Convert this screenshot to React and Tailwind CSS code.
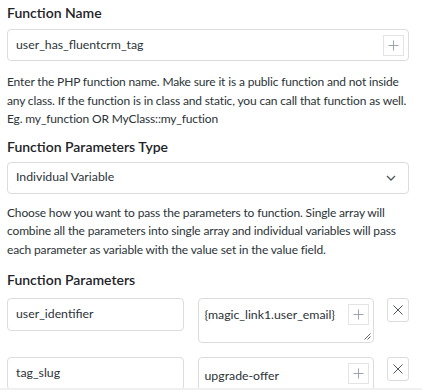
import React from "react";

const font = { fontFamily: "'Segoe UI', Lato, 'Open Sans', sans-serif" };

function PlusBox({ className = "" }) {
  return (
    <div className={"flex h-[21px] w-[21px] items-center justify-center border border-[#e4e4e7] bg-white " + className}>
      <svg width="11" height="11" viewBox="0 0 11 11">
        <path d="M5.5 0.5v10M0.5 5.5h10" stroke="#9ca3af" strokeWidth="1" />
      </svg>
    </div>
  );
}

function CloseBox() {
  return (
    <div className="flex h-[24px] w-[22px] shrink-0 items-center justify-center rounded-[3px] border border-[#dcdcde] bg-white">
      <svg width="10" height="10" viewBox="0 0 10 10">
        <path d="M0.5 0.5l9 9M9.5 0.5l-9 9" stroke="#50575e" strokeWidth="1" />
      </svg>
    </div>
  );
}

function Label({ children, className = "" }) {
  return (
    <div className={"text-[14px] font-semibold leading-[20px] text-[#1d2327] " + className}>{children}</div>
  );
}

function Help({ children, className = "" }) {
  return (
    <p className={"mr-[-6px] text-[12px] leading-[18.5px] tracking-[-0.15px] text-[#2c3338] " + className}>{children}</p>
  );
}

export default function App() {
  return (
    <div className="relative h-[390px] w-[422px] overflow-hidden bg-white" style={font}>
      <div className="flex flex-col px-[7px] pr-[13px]">
        <Label className="mt-[3px]">Function Name</Label>
        <div className="mt-[6px] flex h-[32px] items-center justify-between rounded-[4px] border border-[#dcdcde] pl-[8px] pr-[4px]">
          <span className="text-[12.3px] text-[#2c3338]">user_has_fluentcrm_tag</span>
          <PlusBox />
        </div>
        <Help className="mt-[12px]">
          Enter the PHP function name. Make sure it is a public function and not inside any class. If the function is in class and static, you can call that function as well. Eg. my_function OR MyClass::my_fuction
        </Help>
        <Label className="mt-[8px]">Function Parameters Type</Label>
        <div className="mt-[5px] flex h-[32px] items-center justify-between rounded-[4px] border border-[#dcdcde] pl-[8px] pr-[12px]">
          <span className="text-[12.3px] text-[#2c3338]">Individual Variable</span>
          <svg width="10" height="6" viewBox="0 0 10 6">
            <path d="M1 1l4 4 4-4" stroke="#50575e" strokeWidth="1.3" fill="none" />
          </svg>
        </div>
        <Help className="mt-[10px]">
          Choose how you want to pass the parameters to function. Single array will combine all the parameters into single array and individual variables will pass each parameter as variable with the value set in the value field.
        </Help>
        <Label className="mt-[11px]">Function Parameters</Label>

        <div className="mt-[8px] flex items-start">
          <div className="flex h-[33px] w-[177px] items-center rounded-[4px] border border-[#dcdcde] pl-[8px]">
            <span className="text-[12.3px] text-[#2c3338]">user_identifier</span>
          </div>
          <div className="relative ml-[14px] h-[45px] w-[177px] rounded-[4px] border border-[#dcdcde] pl-[6px] pt-[2px]">
            <span className="text-[12.3px] leading-[18px] text-[#2c3338]">{"{magic_link1.user_email}"}</span>
            <PlusBox className="absolute right-[4px] top-[5px]" />
            <svg className="absolute bottom-[2px] right-[2px]" width="7" height="7" viewBox="0 0 7 7">
              <path d="M6.5 0.5l-6 6M6.5 3.5l-3 3" stroke="#50575e" strokeWidth="0.9" />
            </svg>
          </div>
          <div className="ml-[13px]">
            <CloseBox />
          </div>
        </div>

        <div className="mt-[14px] flex items-start">
          <div className="flex h-[33px] w-[177px] items-center rounded-[4px] border border-[#dcdcde] pl-[8px]">
            <span className="text-[12.3px] text-[#2c3338]">tag_slug</span>
          </div>
          <div className="relative ml-[14px] h-[45px] w-[177px] rounded-[4px] border border-[#dcdcde] pl-[6px] pt-[4px]">
            <span className="text-[12.3px] leading-[18px] text-[#2c3338]">upgrade-offer</span>
            <PlusBox className="absolute right-[4px] top-[5px]" />
          </div>
          <div className="ml-[13px]">
            <CloseBox />
          </div>
        </div>
      </div>
      <div className="absolute bottom-0 left-0 h-[2px] w-full bg-[#f0f0f1]" />
    </div>
  );
}
